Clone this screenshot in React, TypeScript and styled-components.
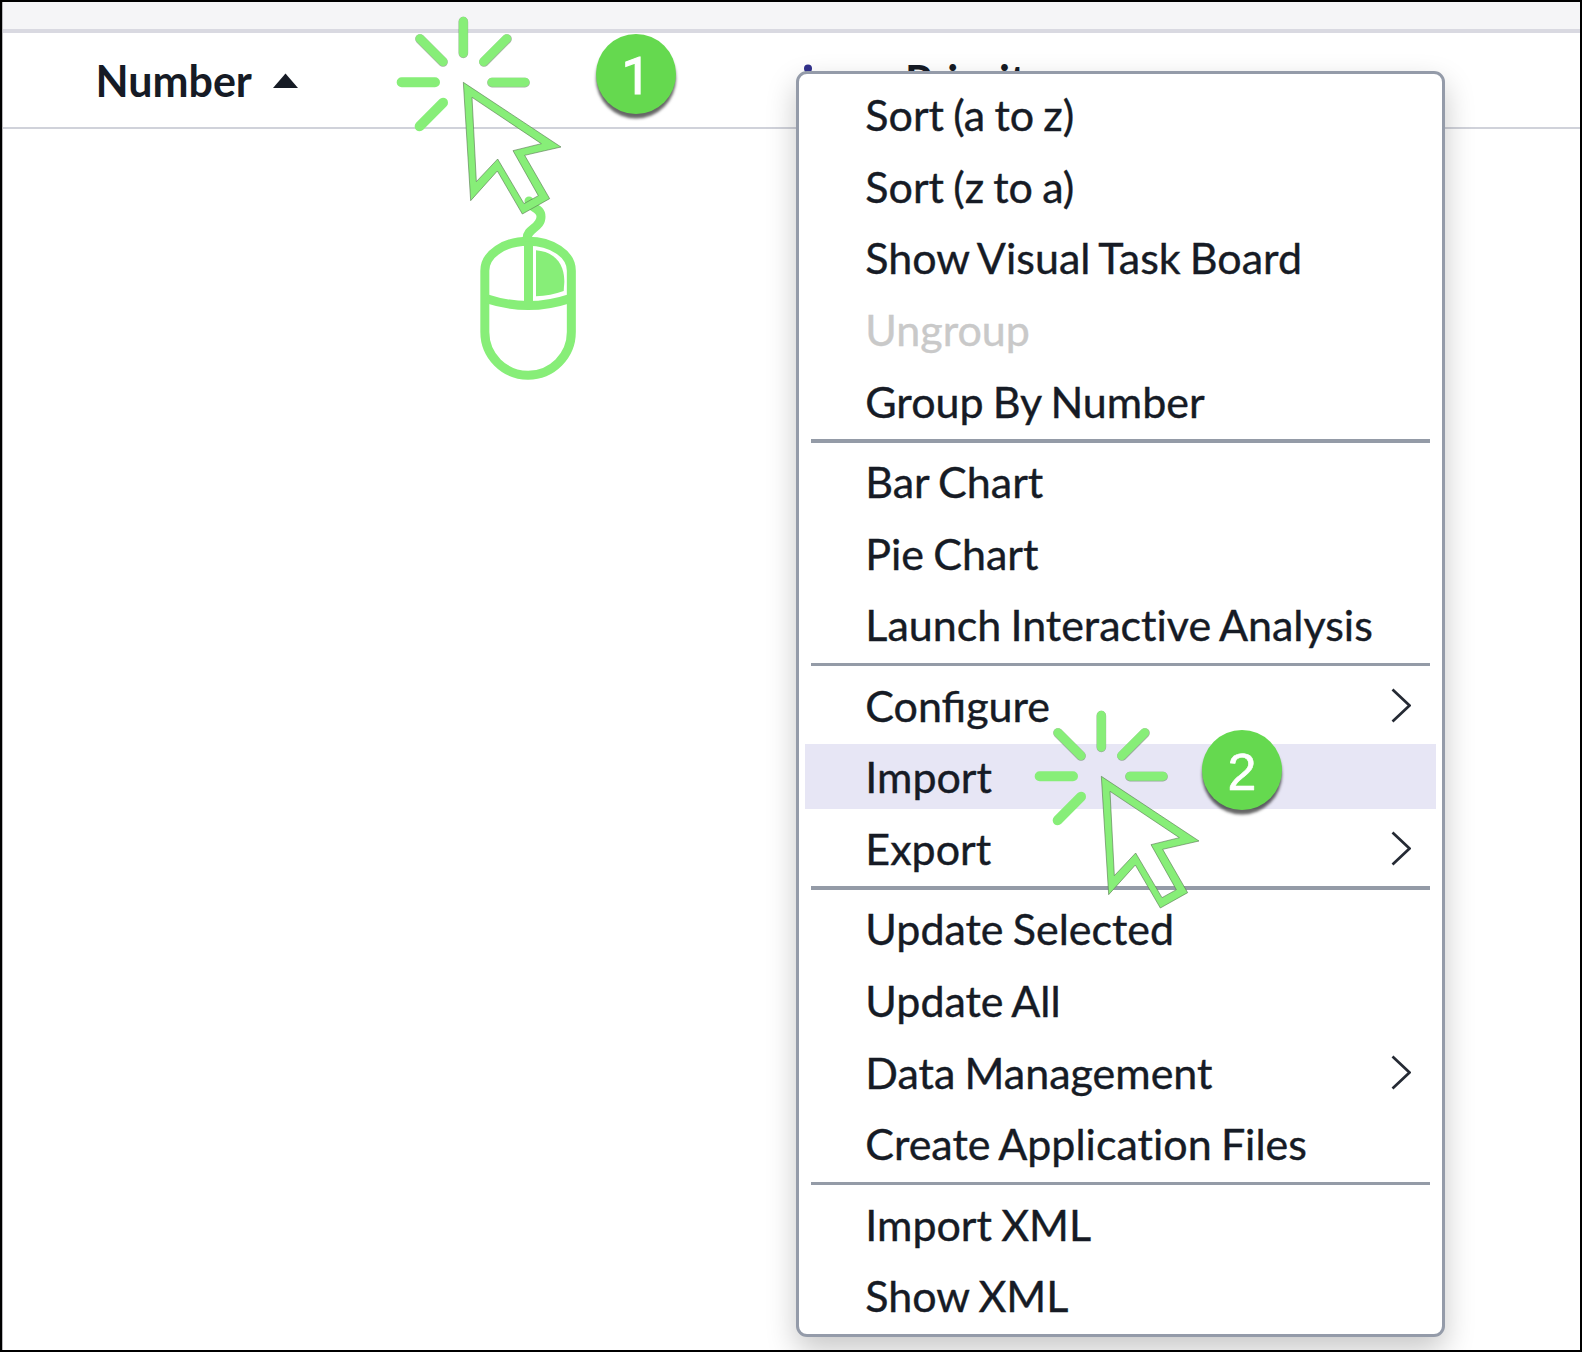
import React from "react";
import styled, { createGlobalStyle } from "styled-components";

const GlobalStyle = createGlobalStyle`
  *, *::before, *::after { box-sizing: border-box; }
  html, body { margin: 0; padding: 0; background: #fff; overflow: hidden; }
`;

const Frame = styled.div`
  position: relative;
  display: flex;
  flex-direction: column;
  width: 1582px;
  height: 1352px;
  border: 2px solid #000;
  background: #fff;
  color: #161b25;
  font-family: Lato, "Liberation Sans", sans-serif;
  overflow: hidden;
  box-shadow: inset 1px 0 0 #b9b9bc;
`;

const TopStrip = styled.div`
  height: 31px;
  flex: none;
  margin-left: 1px;
  background: #f5f5f7;
  border-bottom: 4px solid #d9d9e1;
`;

const HeaderRow = styled.div`
  display: flex;
  flex: none;
  height: 96px;
  margin-left: 1px;
  border-bottom: 2px solid #d0d2da;
`;

const HeaderCell = styled.div<{ $width: number; $indent: number; $gap: number }>`
  display: flex;
  flex: none;
  align-items: center;
  width: ${(p) => p.$width}px;
  padding-left: ${(p) => p.$indent}px;
  gap: ${(p) => p.$gap}px;
`;

const HeaderLabel = styled.span`
  padding-top: 2px;
  font-size: 43px;
  font-weight: 700;
  line-height: 52px;
`;

const SortArrow = styled.svg`
  display: block;
  width: 25px;
  height: 15px;
`;

const InfoIcon = styled.svg`
  display: block;
  width: 10px;
  height: 33px;
`;

const Menu = styled.div`
  position: absolute;
  left: 793.5px;
  top: 68.5px;
  width: 649px;
  height: 1266.5px;
  padding: 5px 6px;
  background: #fff;
  border: 3px solid #949ba9;
  border-radius: 11px;
  box-shadow: 0 13px 30px rgba(0, 0, 0, 0.22);
`;

const Group = styled.div`
  display: flex;
  flex-direction: column;
  gap: 7.1px;
  padding: 3.55px 0;
`;

const MenuItem = styled.div<{ $active?: boolean; $disabled?: boolean }>`
  display: flex;
  align-items: center;
  justify-content: space-between;
  height: 64.5px;
  padding: 0 25px 0 60.8px;
  background: ${(p) => (p.$active ? "#e7e6f5" : "transparent")};
  color: ${(p) => (p.$disabled ? "#c9c9c9" : "#161b25")};
`;

const MenuLabel = styled.span<{ $ligatures: boolean }>`
  padding-top: 2px;
  font-size: 43px;
  line-height: 60px;
  white-space: nowrap;
  word-spacing: -1.8px;
  font-variant-ligatures: ${(p) => (p.$ligatures ? "normal" : "none")};
  -webkit-text-stroke: 0.4px currentColor;
`;

const Separator = styled.div`
  height: 3.5px;
  margin: 2.7px 6px;
  background: #949ba7;
`;

const ChevronSvg = styled.svg`
  display: block;
  width: 21px;
  height: 36px;
`;

const Badge = styled.div<{ $x: number; $y: number }>`
  position: absolute;
  left: ${(p) => p.$x}px;
  top: ${(p) => p.$y}px;
  display: flex;
  align-items: center;
  justify-content: center;
  width: 80px;
  height: 80px;
  padding-top: 4px;
  border-radius: 50%;
  background: #65d94f;
  color: #fff;
  box-shadow: 0 4.5px 3px rgba(0, 0, 0, 0.6);
`;

const Digit = styled.span<{ $plain?: boolean }>`
  padding-top: ${(p) => (p.$plain ? 2 : 0)}px;
  font-family: ${(p) => (p.$plain ? "Roboto, sans-serif" : '"Liberation Sans", Arial, sans-serif')};
  font-size: 52px;
  line-height: 76px;
  -webkit-text-stroke: ${(p) => (p.$plain ? 1.2 : 0.6)}px currentColor;
`;

const PointerSvg = styled.svg<{ $x: number; $y: number }>`
  position: absolute;
  left: ${(p) => p.$x}px;
  top: ${(p) => p.$y}px;
  width: 200px;
  height: 400px;
  pointer-events: none;
`;

const GREEN = "#87ee78";
const EDGE = "#55764f";

function Pointer({ x, y, mouse }: { x: number; y: number; mouse?: boolean }) {
  return (
    <PointerSvg $x={x} $y={y} viewBox="0 0 600 1200" aria-hidden="true">
      {mouse && (
        <g fill="none" stroke={GREEN} strokeWidth="27">
          <path d="M441 716C441 685 483 684 483 650C483 620 447 626 447 603" strokeLinecap="round" />
          <path d="M314.500 812C314.500 762 374 723.500 444.500 723.500S574 762 574 812V996A129.750 129.750 0 0 1 314.500 996Z" />
          <path d="M445.500 724V912" />
          <path d="M320 896Q445 937 568 896" />
          <path d="M468 751C520 755 553 787 553 845L551 873Q512 887 468 889Z" fill={GREEN} stroke="none" />
        </g>
      )}
      <g strokeLinecap="round" fill="none">
        <g stroke={EDGE} strokeOpacity="0.55" strokeWidth="29">
          <path d="M250 65V160M120 117L189 186M381 117L312 186M336 248H435" />
        </g>
        <g stroke={GREEN} strokeWidth="27">
          <path d="M250 64V159M120 116L189 185M380 116L311 185M336 246.500H435" />
        </g>
        <path d="M65 246.500H165M189 308L119 379" stroke={GREEN} strokeWidth="30" />
      </g>
      <path
        fill={GREEN}
        fillRule="evenodd"
        stroke={EDGE}
        strokeOpacity="0.6"
        strokeWidth="3"
        d="M250 247L543 441L434 466L509 596L427 642L352 513L272 602ZM276 292L484 431L399 452L475 587L432 611L353 477L289 545Z"
      />
    </PointerSvg>
  );
}

function Chevron() {
  return (
    <ChevronSvg viewBox="0 0 21 36" fill="none" stroke="#252a34" strokeWidth="2.700">
      <path d="M2.500 2.500L19.500 18.500L2.500 34.500" />
    </ChevronSvg>
  );
}

type Entry = { label: string; active?: boolean; disabled?: boolean; submenu?: boolean };

const groups: Entry[][] = [
  [
    { label: "Sort (a to z)" },
    { label: "Sort (z to a)" },
    { label: "Show Visual Task Board" },
    { label: "Ungroup", disabled: true },
    { label: "Group By Number" },
  ],
  [{ label: "Bar Chart" }, { label: "Pie Chart" }, { label: "Launch Interactive Analysis" }],
  [
    { label: "Configure", submenu: true },
    { label: "Import", active: true },
    { label: "Export", submenu: true },
  ],
  [
    { label: "Update Selected" },
    { label: "Update All" },
    { label: "Data Management", submenu: true },
    { label: "Create Application Files" },
  ],
  [{ label: "Import XML" }, { label: "Show XML" }],
];

export default function App() {
  return (
    <>
      <GlobalStyle />
      <Frame>
        <TopStrip />
        <HeaderRow>
          <HeaderCell $width={798} $indent={92.5} $gap={21.5}>
            <HeaderLabel>Number</HeaderLabel>
            <SortArrow viewBox="0 0 25 15">
              <path d="M12.500 0.500L25 15H0Z" fill="#161b25" />
            </SortArrow>
          </HeaderCell>
          <HeaderCell $width={779} $indent={2} $gap={92}>
            <InfoIcon viewBox="0 0 10 33" fill="#32318c">
              <circle cx="5" cy="4.500" r="4" />
              <rect x="2" y="13" width="6" height="20" />
            </InfoIcon>
            <HeaderLabel>Priority</HeaderLabel>
          </HeaderCell>
        </HeaderRow>

        <Menu>
          {groups.map((group, i) => (
            <React.Fragment key={i}>
              {i > 0 && <Separator />}
              <Group>
                {group.map((item) => (
                  <MenuItem key={item.label} $active={item.active} $disabled={item.disabled}>
                    {/* keep the "fi" ligature, but never join "ti" */}
                    <MenuLabel $ligatures={!item.label.includes("ti")}>{item.label}</MenuLabel>
                    {item.submenu && <Chevron />}
                  </MenuItem>
                ))}
              </Group>
            </React.Fragment>
          ))}
        </Menu>

        <Pointer x={378} y={-2} mouse />
        <Pointer x={1016} y={692.3} />
        <Badge $x={594} $y={32}>
          <Digit $plain>1</Digit>
        </Badge>
        <Badge $x={1200} $y={728}>
          <Digit>2</Digit>
        </Badge>
      </Frame>
    </>
  );
}
